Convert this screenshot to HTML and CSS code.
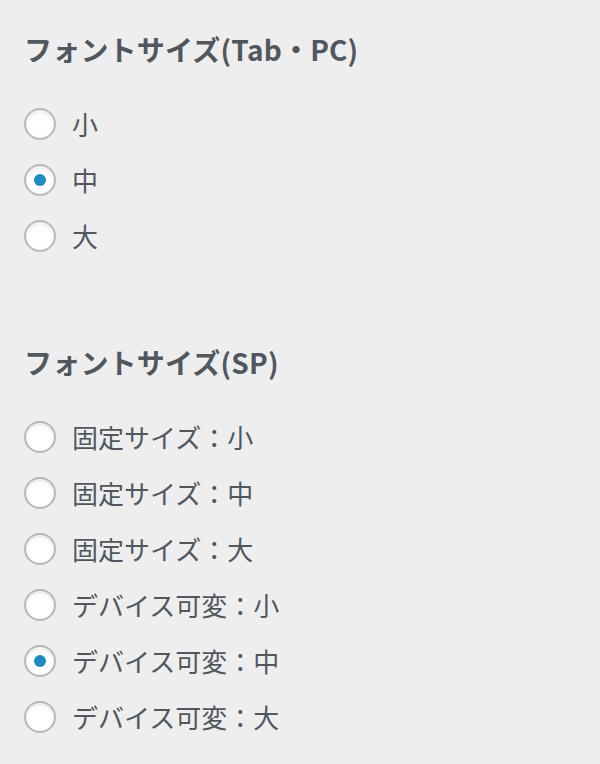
FILE: index.html
```html
<!DOCTYPE html>
<html lang="ja">
<head>
<meta charset="UTF-8">
<meta name="viewport" content="width=device-width, initial-scale=1.0">
<title>フォントサイズ</title>
<link rel="stylesheet" href="styles.css">
</head>
<body>

<div class="panel">
    <fieldset class="option-group">
        <legend class="group-title">フォントサイズ(Tab・PC)</legend>
        <label class="radio-row"><input type="radio" name="fontPc" value="s"> <span>小</span></label>
        <label class="radio-row"><input type="radio" name="fontPc" value="m" checked> <span>中</span></label>
        <label class="radio-row"><input type="radio" name="fontPc" value="l"> <span>大</span></label>
    </fieldset>

    <fieldset class="option-group">
        <legend class="group-title">フォントサイズ(SP)</legend>
        <label class="radio-row"><input type="radio" name="fontSp" value="fixed-s"> <span>固定サイズ：小</span></label>
        <label class="radio-row"><input type="radio" name="fontSp" value="fixed-m"> <span>固定サイズ：中</span></label>
        <label class="radio-row"><input type="radio" name="fontSp" value="fixed-l"> <span>固定サイズ：大</span></label>
        <label class="radio-row"><input type="radio" name="fontSp" value="vw-s"> <span>デバイス可変：小</span></label>
        <label class="radio-row"><input type="radio" name="fontSp" value="vw-m" checked> <span>デバイス可変：中</span></label>
        <label class="radio-row"><input type="radio" name="fontSp" value="vw-l"> <span>デバイス可変：大</span></label>
    </fieldset>
</div>

</body>
</html>
```

FILE: styles.css
```css
body {
    margin: 0;
    background-color: #eeeeee;
    font-family: "Noto Sans CJK JP", "Noto Sans", sans-serif;
    color: #50575e;
}

.panel {
    display: flex;
    flex-direction: column;
    gap: 78px;
    padding: 29px 24px 0 24px;
}

.option-group {
    display: flex;
    flex-direction: column;
    margin: 0;
    padding: 0;
    border: none;
}

.group-title {
    float: left;
    width: 100%;
    padding: 0;
    margin: 0 0 27px 0;
    font-size: 28px;
    line-height: 40px;
    font-weight: bold;
    letter-spacing: 0.2px;
    color: #50575e;
}

.radio-row {
    display: flex;
    align-items: center;
    gap: 16px;
    height: 56px;
    font-size: 26px;
    line-height: 56px;
    cursor: pointer;
}

.radio-row input[type="radio"] {
    appearance: none;
    -webkit-appearance: none;
    display: flex;
    align-items: center;
    justify-content: center;
    width: 32px;
    height: 32px;
    margin: 0;
    border: 2px solid #b4b9be;
    border-radius: 50%;
    background-color: #ffffff;
    box-shadow: inset 0 2px 4px rgba(0, 0, 0, 0.1);
    box-sizing: border-box;
}

.radio-row input[type="radio"]:checked::before {
    content: "";
    width: 12px;
    height: 12px;
    border-radius: 50%;
    background-color: #1e8cbe;
}
```
